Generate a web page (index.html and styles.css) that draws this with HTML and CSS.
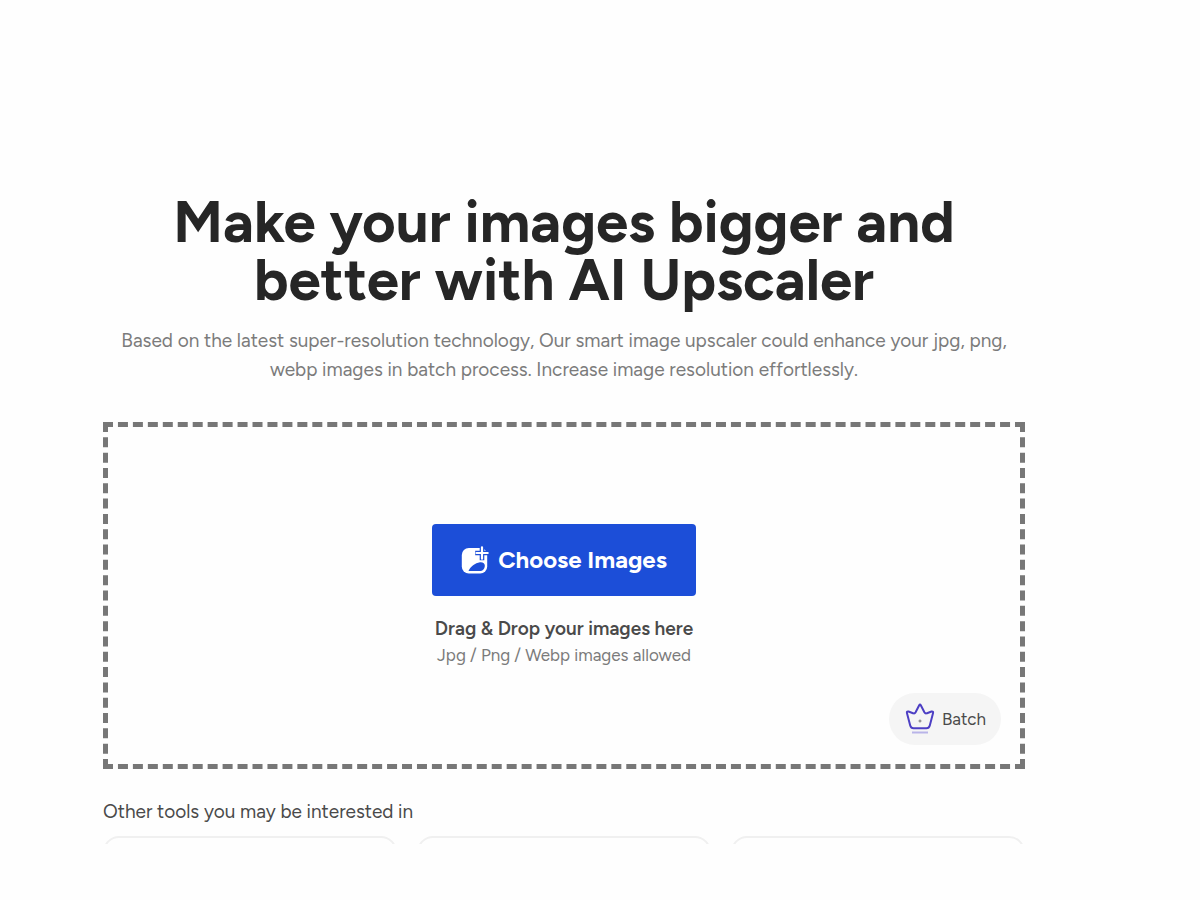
FILE: index.html
```html
<!DOCTYPE html>
<html lang="en">
  <head>
    <meta charset="utf-8">
    <title>AI Upscaler</title>
    <meta name="viewport" content="width=device-width, initial-scale=1">
    <link rel="stylesheet" href="styles.css">
  </head>
  <body>
    <main class="page">
      <!-- Intro -->
      <header class="intro">
        <h1>Make your images bigger and<br>better with AI Upscaler</h1>
        <p>Based on the latest super-resolution technology, Our smart image upscaler could enhance your jpg, png,<br>webp images in batch process. Increase image resolution effortlessly.</p>
      </header>

      <!-- Upload area -->
      <section class="dropzone">
        <button type="button" class="choose-btn">
          <svg class="choose-icon" viewBox="0 0 28 28" aria-hidden="true">
            <rect x="0.800" y="2" width="25.400" height="25.600" rx="7" fill="#fff"/>
            <path d="M7.500 25C9.500 20.500 14 17 19 16.300C22 16 23.800 17.500 23.800 19.500C23.800 23 21.800 25 18.500 25Z" fill="#1c4ed8"/>
            <path d="M21 0.500V14.300M14.200 7H28" fill="none" stroke="#1c4ed8" stroke-width="4.600"/>
            <path d="M21 1.300V12.700M15.500 7H26.700" fill="none" stroke="#fff" stroke-width="2.200" stroke-linecap="round"/>
          </svg>
          Choose Images
        </button>
        <p class="drop-title">Drag &amp; Drop your images here</p>
        <p class="drop-note">Jpg / Png / Webp images allowed</p>

        <button type="button" class="batch-btn">
          <svg class="batch-icon" viewBox="0 0 30 32" aria-hidden="true">
            <path d="M14.200 2.200Q15 0.800 15.800 2.200L19.400 9.200C20 10.300 21 10.700 22 10.200L26.500 8.500C27.800 8.100 28.400 8.900 28 10.300L24.800 22.500C24.200 24.600 23.300 25.300 21.500 25.300H8.500C6.700 25.300 5.800 24.600 5.200 22.500L2 10.300C1.600 8.900 2.200 8.100 3.500 8.500L8 10.200C9 10.700 10 10.300 10.600 9.200Z" fill="none" stroke="#4d3fc4" stroke-width="2" stroke-linejoin="round"/>
            <path d="M15 16.500V19.500M13.500 18H16.500" stroke="#777" stroke-width="1"/>
            <path d="M7 29.500H23" stroke="#b9b4e8" stroke-width="2"/>
          </svg>
          Batch
        </button>
      </section>

      <!-- Other tools -->
      <section class="tools">
        <h2>Other tools you may be interested in</h2>
        <div class="tool-list">
          <div class="tool-card"></div>
          <div class="tool-card"></div>
          <div class="tool-card"></div>
        </div>
      </section>
    </main>
  </body>
</html>
```

FILE: styles.css
```css
* {
  box-sizing: border-box;
}
body {
  margin: 0;
  background-color: #fefefe;
  font-family: Figtree, Lato, sans-serif;
  color: #4a4a4a;
}
h1, h2, p {
  margin: 0;
}
.page {
  margin: 0 175px 0 103px;
  padding-top: 193px;
}
.intro {
  text-align: center;
}
h1 {
  font-size: 58px;
  line-height: 58px;
  font-weight: 700;
  color: #262626;
}
.intro p {
  margin-top: 17px;
  font-size: 19px;
  line-height: 29px;
  color: #7b7b7b;
}

/* Dashed upload box */
.dropzone {
  position: relative;
  display: flex;
  flex-direction: column;
  align-items: center;
  margin-top: 38px;
  padding: 97px 20px 96px;
  border: 5px dashed #777;
}
.choose-btn {
  display: flex;
  align-items: center;
  gap: 9px;
  padding: 0 29px;
  border: none;
  border-radius: 4px;
  background-color: #1c4ed8;
  color: #fff;
  font-family: inherit;
  font-size: 24px;
  line-height: 72px;
  font-weight: 700;
  cursor: pointer;
}
.choose-icon {
  width: 28px;
  height: 28px;
}
.drop-title {
  margin-top: 20px;
  font-size: 19px;
  line-height: 26px;
  font-weight: 600;
}
.drop-note {
  font-size: 17px;
  line-height: 26px;
  color: #7b7b7b;
}
.batch-btn {
  position: absolute;
  right: 19px;
  bottom: 19px;
  display: flex;
  align-items: center;
  gap: 7px;
  padding: 0 15px 0 16px;
  border: none;
  border-radius: 26px;
  background-color: #f5f5f5;
  color: #4a4a4a;
  font-family: inherit;
  font-size: 17px;
  line-height: 52px;
  cursor: pointer;
}
.batch-icon {
  width: 30px;
  height: 32px;
}

/* Cards row, only the top edge shows */
.tools {
  margin-top: 28px;
}
h2 {
  font-size: 19px;
  line-height: 29px;
  font-weight: 400;
}
.tool-list {
  display: grid;
  grid-template-columns: repeat(3, 1fr);
  gap: 20px;
  height: 8px;
  margin-top: 10px;
  overflow: hidden;
}
.tool-card {
  height: 120px;
  border: 2px solid #f0f0f0;
  border-radius: 16px;
}
```
